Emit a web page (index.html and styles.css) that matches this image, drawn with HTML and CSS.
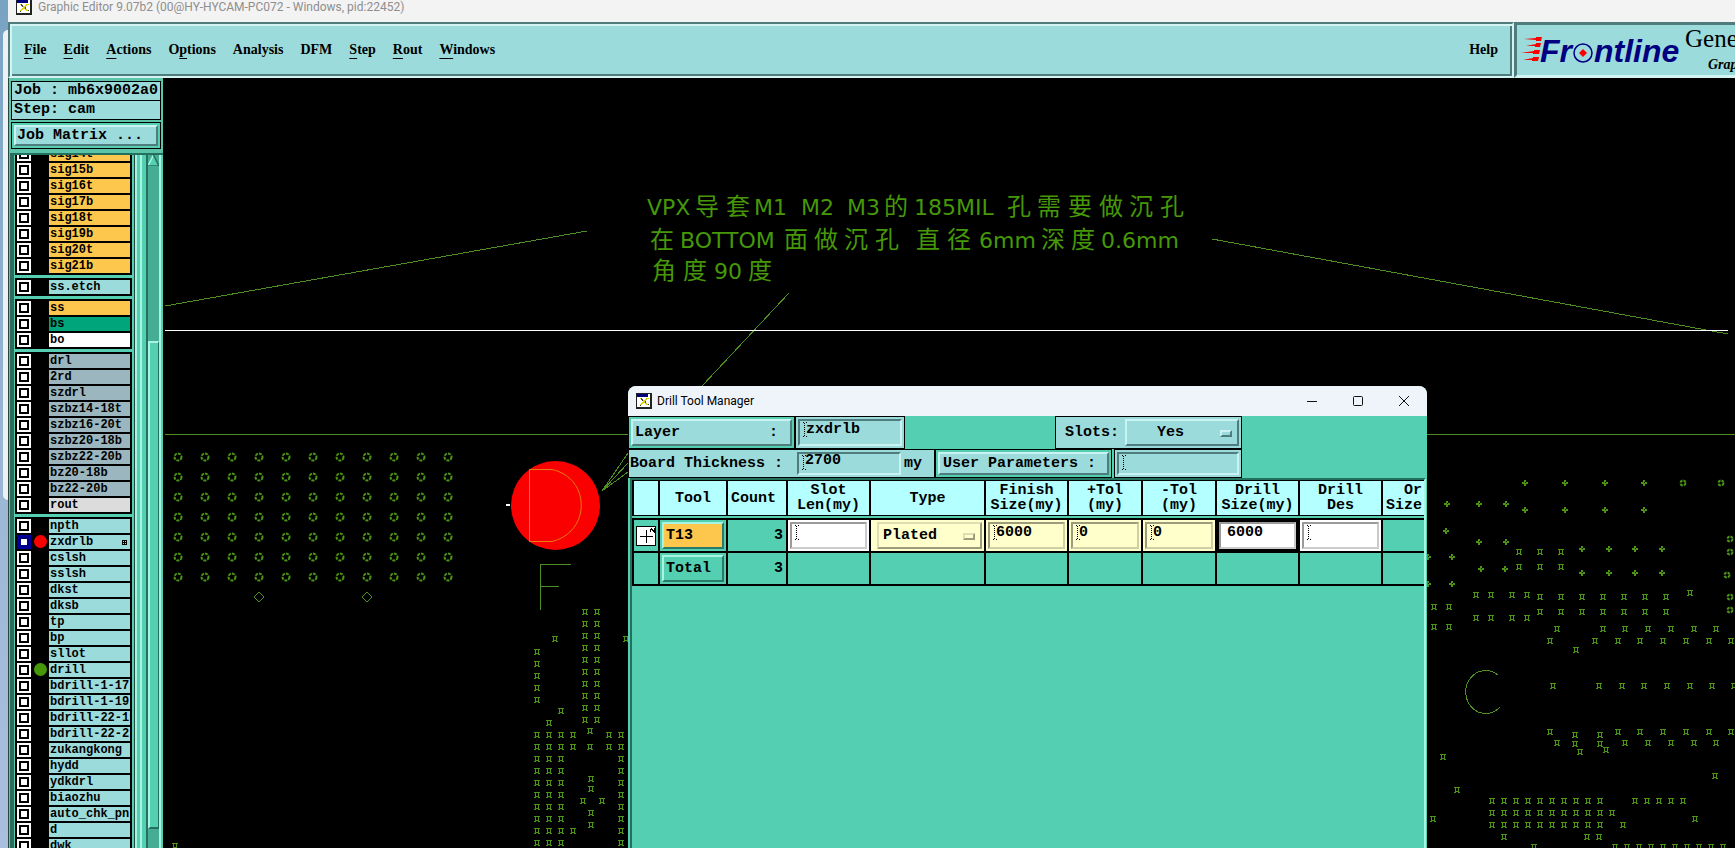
FILE: index.html
```html
<!DOCTYPE html>
<html lang="en">
<head>
    <meta charset="UTF-8">
    <meta name="viewport" content="width=device-width, initial-scale=1.0">
    <title>Graphic Editor</title>
    <link rel="stylesheet" href="styles.css">
</head>
<body>
    <div class="desktop">
        <div class="behind-window"></div>
    </div>

    <div class="app">
        <header class="titlebar">
            <svg class="x-icon" width="16" height="16" viewBox="0 0 16 16" shape-rendering="crispEdges">
                <rect width="16" height="16" fill="#222"/>
                <rect x="1" y="1" width="13" height="13" fill="#fff"/>
                <rect x="1" y="1" width="11" height="3" fill="#00007c"/>
                <path d="M4 5h2v1h1v1h2v-1h1v-1h3v1h-2v1h-1v1h-1v1h1v1h1v1h1v1h-2v-1h-1v-1h-2v1h-1v1h-2v-1h1v-1h1v-1h1v-1h-1v-1h-1v-1h-1z" fill="#e0d400"/>
                <path d="M5 5l2 3M10 8l-1 2M12 11l1 1M4 12h1" stroke="#444" fill="none"/>
            </svg>
            <span>Graphic Editor 9.07b2 (00@HY-HYCAM-PC072 - Windows, pid:22452)</span>
        </header>

        <div class="top">
            <nav class="menubar">
                <button><u>F</u>ile</button>
                <button><u>E</u>dit</button>
                <button><u>A</u>ctions</button>
                <button>O<u>p</u>tions</button>
                <button>Analysis</button>
                <button>DFM</button>
                <button><u>S</u>tep</button>
                <button><u>R</u>out</button>
                <button><u>W</u>indows</button>
                <button class="help">Help</button>
            </nav>
            <div class="brand">
                <svg class="logo" width="164" height="34" viewBox="0 0 164 34">
                    <g fill="#fb0000">
                        <path d="M3 4l12-1V2h6l-1 4h-5V5z"/>
                        <path d="M5 11l10-2V8h5l-1 4h-5v-1z"/>
                        <path d="M0 18l13-2v-1h6l-1 4h-6v-1z"/>
                        <path d="M2 25l10-2v-1h6l-1 4h-6v-1z"/>
                    </g>
                    <text x="19" y="27" class="logo-text">Fr</text>
                    <circle cx="62" cy="18" r="9" fill="none" stroke="#000080" stroke-width="1.5"/>
                    <path d="M62 14l4 4-4 4-4-4z" fill="#fb0000"/>
                    <text x="73" y="27" class="logo-text">ntline</text>
                </svg>
                <div class="brand-text">
                    <div class="brand-name">Genesis</div>
                    <div class="brand-sub">Graphic</div>
                </div>
            </div>
        </div>

        <div class="workspace">
            <aside class="sidebar">
                <div class="info">Job : mb6x9002a0</div>
                <div class="info">Step: cam</div>
                <div class="matrix"><button class="raised">Job Matrix ...</button></div>
                <div class="list-frame">
                    <div class="layers" id="layers"></div>
                    <div class="rails"></div>
                    <div class="scrollbar">
                        <svg width="11" height="11" viewBox="0 0 11 11">
                            <path d="M5.500 0L11 11H0z" fill="#55cfb1"/>
                            <path d="M5.500 0L0 11" stroke="#a6f5e2" stroke-width="1.500"/>
                            <path d="M5.500 0L11 11H0" stroke="#24705f" stroke-width="1.500" fill="none"/>
                        </svg>
                        <div class="trough-top"></div>
                        <div class="thumb"></div>
                        <div class="trough-bottom"></div>
                    </div>
                </div>
            </aside>

            <main class="canvas">
                <svg class="board" width="100%" height="100%">
                    <defs>
                        <path id="pad" d="M-3-3h6v1h-6zM-2-2h1v4h-1zM1-2h1v4h-1zM-2 1h4v1h-4zM-3 2h2v1h-2zM1 2h2v1h-2z"/>
                        <path id="cross" fill-rule="evenodd" d="M-1-3h2v2h2v2h-2v2h-2v-2h-2v-2h2zM0-1h1v1h-1z"/>
                        <circle id="via" r="2.500" class="ring"/>
                        <circle id="hole" r="3.500" class="ring"/>
                    </defs>
                    <g transform="translate(-163 -78)">
                        <g class="trace">
                            <path d="M165 306L587 231M1212 239L1728 334M789 293L702 386"/>
                            <path d="M165 434.500H1735"/>
                            <path d="M602 491L628 453M602 491L628 463M602 491L628 472"/>
                            <path d="M571 564.500H540.500V610M540 586.500H559"/>
                            <path d="M1498 675A20 21.500 0 1 0 1500 707"/>
                            <path d="M259 592l5 5-5 5-5-5zM367 592l5 5-5 5-5-5z"/>
                        </g>
                        <path d="M165 330.500H1728" stroke="#fff"/>
                        <circle cx="555.500" cy="505.500" r="44.500" fill="#fb0000"/>
                        <path d="M529.500 469.500H552C591 478 591 532 552 541.500H529.500z" fill="none" stroke="#e87a10"/>
                        <rect x="506" y="504" width="4" height="2" fill="#fff"/>
                        <g class="note">
                            <text y="215"><tspan x="647">VPX</tspan><tspan x="695" class="cjk">导</tspan><tspan x="726" class="cjk">套</tspan><tspan x="754">M1</tspan><tspan x="801">M2</tspan><tspan x="847">M3</tspan><tspan x="884" class="cjk">的</tspan><tspan x="914">185MIL</tspan><tspan x="1007" class="cjk">孔</tspan><tspan x="1037" class="cjk">需</tspan><tspan x="1068" class="cjk">要</tspan><tspan x="1099" class="cjk">做</tspan><tspan x="1129" class="cjk">沉</tspan><tspan x="1160" class="cjk">孔</tspan></text>
                            <text y="248"><tspan x="650" class="cjk">在</tspan><tspan x="680">BOTTOM</tspan><tspan x="784" class="cjk">面</tspan><tspan x="814" class="cjk">做</tspan><tspan x="844" class="cjk">沉</tspan><tspan x="875" class="cjk">孔</tspan><tspan x="916" class="cjk">直</tspan><tspan x="947" class="cjk">径</tspan><tspan x="979">6mm</tspan><tspan x="1041" class="cjk">深</tspan><tspan x="1071" class="cjk">度</tspan><tspan x="1101">0.6mm</tspan></text>
                            <text y="279"><tspan x="652" class="cjk">角</tspan><tspan x="683" class="cjk">度</tspan><tspan x="714">90</tspan><tspan x="748" class="cjk">度</tspan></text>
                        </g>
                        <g id="pads" class="pads"></g>
                    </g>
                </svg>

                <section class="dialog">
                    <header class="dialog-title">
                        <svg class="x-icon" width="16" height="16" viewBox="0 0 16 16" shape-rendering="crispEdges">
                            <rect width="16" height="16" fill="#222"/>
                            <rect x="1" y="1" width="13" height="13" fill="#fff"/>
                            <rect x="1" y="1" width="11" height="3" fill="#00007c"/>
                            <path d="M4 5h2v1h1v1h2v-1h1v-1h3v1h-2v1h-1v1h-1v1h1v1h1v1h1v1h-2v-1h-1v-1h-2v1h-1v1h-2v-1h1v-1h1v-1h1v-1h-1v-1h-1v-1h-1z" fill="#e0d400"/>
                            <path d="M5 5l2 3M10 8l-1 2M12 11l1 1M4 12h1" stroke="#444" fill="none"/>
                        </svg>
                        <span>Drill Tool Manager</span>
                        <div class="window-buttons">
                            <button aria-label="Minimize"><svg width="10" height="10"><path d="M0 5.500H10" stroke="#111"/></svg></button>
                            <button aria-label="Maximize"><svg width="10" height="10"><rect x=".5" y=".5" width="9" height="9" rx="1" fill="none" stroke="#111"/></svg></button>
                            <button aria-label="Close"><svg width="10" height="10"><path d="M0 0L10 10M10 0L0 10" stroke="#111"/></svg></button>
                        </div>
                    </header>

                    <div class="form-row first">
                        <div class="box green layer-box"><button class="raised"><span>Layer</span><span>:</span></button></div>
                        <div class="box name-box"><input class="field beam" aria-label="Layer" value="zxdrlb"></div>
                        <div class="box slots-box">
                            <label for="slots">Slots:</label>
                            <span class="option">
                                <select id="slots" class="raised"><option>Yes</option><option>No</option></select>
                            </span>
                        </div>
                    </div>
                    <div class="form-row">
                        <div class="box thickness-box">
                            <label for="thickness">Board Thickness :</label>
                            <input id="thickness" class="field beam" value="2700">
                            <span>my</span>
                        </div>
                        <div class="box green user-box"><button class="raised">User Parameters :</button></div>
                        <div class="box params-box"><input class="field beam" aria-label="User Parameters"></div>
                    </div>

                    <div class="tools">
                        <table>
                            <colgroup>
                                <col class="w-icon"><col class="w-tool"><col class="w-count"><col class="w-size"><col class="w-type"><col class="w-size"><col class="w-tol"><col class="w-tol"><col class="w-size"><col class="w-size"><col class="w-size">
                            </colgroup>
                            <thead>
                                <tr>
                                    <th></th>
                                    <th>Tool</th>
                                    <th class="left">Count</th>
                                    <th>Slot<br>Len(my)</th>
                                    <th>Type</th>
                                    <th>Finish<br>Size(my)</th>
                                    <th>+Tol<br>(my)</th>
                                    <th>-Tol<br>(my)</th>
                                    <th>Drill<br>Size(my)</th>
                                    <th>Drill<br>Des</th>
                                    <th class="left">&nbsp;&nbsp;Or<br>Size</th>
                                </tr>
                            </thead>
                            <tbody>
                                <tr>
                                    <td>
                                        <button class="expand" aria-label="Expand">
                                            <svg width="20" height="20" shape-rendering="crispEdges">
                                                <rect x=".5" y=".5" width="19" height="19" fill="#fff" stroke="#000"/>
                                                <path d="M4 10.500H17M10.500 4V17" stroke="#000"/>
                                                <path d="M14.500 6V2.500M15 2.500L18 5.500V2" stroke="#000" fill="none"/>
                                            </svg>
                                        </button>
                                    </td>
                                    <td><button class="tool orange">T13</button></td>
                                    <td class="count">3</td>
                                    <td class="white"><input class="field beam" aria-label="Slot Len"></td>
                                    <td class="cream">
                                        <span class="option">
                                            <select class="raised" aria-label="Type"><option>Plated</option><option>Non Plated</option></select>
                                        </span>
                                    </td>
                                    <td class="cream"><input class="field beam" aria-label="Finish Size" value="6000"></td>
                                    <td class="cream"><input class="field beam" aria-label="+Tol" value="0"></td>
                                    <td class="cream"><input class="field beam" aria-label="-Tol" value="0"></td>
                                    <td class="white focus"><input class="field" aria-label="Drill Size" value="6000"></td>
                                    <td class="white"><input class="field beam" aria-label="Drill Des"></td>
                                    <td></td>
                                </tr>
                                <tr>
                                    <td></td>
                                    <td><button class="tool">Total</button></td>
                                    <td class="count">3</td>
                                    <td></td><td></td><td></td><td></td><td></td><td></td><td></td><td></td>
                                </tr>
                            </tbody>
                        </table>
                    </div>
                </section>
            </main>
        </div>
    </div>

    <script>
        // layer list, grouped as in the job matrix
        const groups = [
            { type: 'signal', names: ['sig14t', 'sig15b', 'sig16t', 'sig17b', 'sig18t', 'sig19b', 'sig20t', 'sig21b'] },
            { type: 'misc', names: ['ss.etch'] },
            { type: 'signal', names: ['ss', 'bs', 'bo'] },
            { type: 'drill', names: ['drl', '2rd', 'szdrl', 'szbz14-18t', 'szbz16-20t', 'szbz20-18b', 'szbz22-20b', 'bz20-18b', 'bz22-20b', 'rout'] },
            { type: 'misc', names: ['npth', 'zxdrlb', 'cslsh', 'sslsh', 'dkst', 'dksb', 'tp', 'bp', 'sllot', 'drill', 'bdrill-1-17', 'bdrill-1-19', 'bdrill-22-19', 'bdrill-22-21', 'zukangkong', 'hydd', 'ydkdrl', 'biaozhu', 'auto_chk_pnl', 'd', 'dwk'] }
        ];
        const special = { bs: 'mask', bo: 'white', rout: 'rout' };
        const dots = { zxdrlb: 'red', drill: 'green' };

        document.getElementById('layers').innerHTML = groups.map(g => `<div class="group">${g.names.map(n => `
            <label class="layer">
                <input type="checkbox" ${n === 'zxdrlb' ? 'checked' : ''}>
                <span class="dot ${dots[n] || ''}"></span>
                <span class="layer-name ${special[n] || g.type}">${n}${n === 'zxdrlb' ? '<i class="mark"></i>' : ''}</span>
            </label>`).join('')}</div>`).join('');

        // features on the board: [y, x, x, ...]
        function step(start, gap, count) {
            return Array.from({ length: count }, (_, i) => start + gap * i);
        }

        const pads = [
            [639, 555, 626], [711, 561], [723, 549], [731, 590],
            [735, 537, 549, 561, 573, 609, 621], [747, 537, 549, 561, 573, 590, 609, 621],
            [779, 591], [789, 591], [801, 583, 602], [813, 591], [825, 591], [831, 573], [846, 175],
            [552, 1519, 1540, 1561], [567, 1519, 1540, 1561],
            [595, 1476, 1491, 1512, 1527], [618, 1476, 1491, 1512, 1527],
            [597, ...step(1540, 21, 7)], [612, ...step(1540, 21, 7)], [593, 1690],
            [607, 1434, 1449], [627, 1434, 1449],
            [629, 1557, 1603, 1625, 1648, 1671, 1694, 1716],
            [641, 1550, 1595, 1618, 1640, 1663, 1686, 1709, 1731], [650, 1576],
            [686, 1553, 1599, 1622, 1644, 1667, 1690, 1712, 1734],
            [732, 1550, 1618, 1640, 1663, 1686, 1709, 1731], [735, 1575, 1600],
            [743, 1557, 1625, 1648, 1671, 1694, 1716], [744, 1575, 1600],
            [752, 1580], [750, 1606], [757, 1443], [776, 1715], [790, 1457], [819, 1433, 1695],
            [801, ...step(1492, 12, 10), ...step(1635, 12, 5)],
            [813, ...step(1492, 12, 11)], [825, ...step(1492, 12, 10), 1623],
            [837, 1504, 1587, 1599], [847, 1534, ...step(1615, 12, 10)]
        ];
        step(612, 12, 10).forEach(y => pads.push([y, 585, 597]));
        step(652, 12, 5).forEach(y => pads.push([y, 537]));
        step(759, 12, 8).forEach(y => pads.push([y, 537, 549, 561, 621]));

        const crosses = [
            [483, 1525, 1565, 1605, 1644], [510, 1525, 1565, 1605, 1644],
            [504, 1447, 1479, 1506], [531, 1446], [542, 1479, 1506],
            [549, 1582, 1609, 1635, 1662], [573, 1582, 1609, 1635, 1662],
            [569, 1481, 1505], [557, 1428, 1452], [584, 1428, 1452]
        ];
        const vias = [[483, 1683, 1721], [539, 1730], [552, 1730], [575, 1727], [597, 1730], [610, 1730]];
        const holes = step(457, 20, 7).map(y => [y, ...step(178, 27, 11)]);

        function draw(id, rows) {
            return rows.map(([y, ...xs]) => xs.map(x => `<use href="#${id}" x="${x}" y="${y}"/>`).join('')).join('');
        }
        document.getElementById('pads').innerHTML =
            draw('pad', pads) + draw('cross', crosses) + draw('via', vias) + draw('hole', holes);
    </script>
</body>
</html>
```

FILE: styles.css
```css
*, *::before, *::after {
    box-sizing: border-box;
}
body {
    margin: 0;
    height: 100vh;
    display: flex;
    overflow: hidden;
    background-color: #000;
    color: #000;
    font: bold 15px/18px "Liberation Mono", "Courier New", monospace;
}
button, input, select {
    font: inherit;
    color: inherit;
    margin: 0;
    padding: 0;
    border: none;
    border-radius: 0;
    background: none;
    appearance: none;
    outline: none;
}

/* desktop strip left of the window */
.desktop {
    flex: 0 0 8px;
    padding: 30px 0 0 3px;
    background: linear-gradient(#79a3c3, #9db8d6 60%, #aabfdd);
}
.behind-window {
    height: 470px;
    background-color: #eef1f3;
    border-radius: 5px 0 0 5px;
}

.app {
    flex: 1;
    min-width: 0;
    display: flex;
    flex-direction: column;
}
.titlebar {
    height: 22px;
    padding: 0 0 8px 8px;
    display: flex;
    align-items: center;
    gap: 6px;
    background-color: #f3f3f3;
    color: #8e8e8e;
    font: 12px/14px Roboto, sans-serif;
}
.titlebar .x-icon {
    flex: none;
}

/* menu bar */
.top {
    height: 56px;
    display: flex;
    background-color: #9cdbdb;
}
.menubar {
    flex: 1;
    display: flex;
    align-items: center;
    gap: 17px;
    padding: 0 14px 0 14px;
    border: 2px solid;
    border-color: #4f7d7d #d4f4f4 #d4f4f4 #4f7d7d;
    box-shadow: inset 2px 2px #d4f4f4, inset -2px -2px #4f7d7d;
    font: bold 14px/20px "Liberation Serif", "Times New Roman", serif;
}
.menubar u {
    text-underline-offset: 4px;
    text-decoration-thickness: 1px;
}
.menubar .help {
    margin-left: auto;
}
.brand {
    flex: 0 0 221px;
    display: flex;
    overflow: hidden;
    padding: 10px 0 0 4px;
    border-style: solid;
    border-width: 3px 0 3px 3px;
    border-color: #4f7d7d #d4f4f4 #d4f4f4 #4f7d7d;
    font-family: "Liberation Serif", "Times New Roman", serif;
}
.logo {
    flex: none;
}
.logo-text {
    font: italic bold 32px "Liberation Sans", Arial, sans-serif;
    fill: #000080;
}
.brand-text {
    margin-top: -10px;
    white-space: nowrap;
}
.brand-name {
    font-size: 25px;
    font-weight: normal;
    line-height: 28px;
}
.brand-sub {
    padding-left: 23px;
    font-size: 14px;
    font-style: italic;
    line-height: 24px;
}

/* layer panel */
.workspace {
    flex: 1;
    min-height: 0;
    display: flex;
}
.sidebar {
    flex: 0 0 155px;
    display: flex;
    flex-direction: column;
    padding: 3px 0 0 1px;
    border-left: 1px solid #24483f;
    background-color: #5cc4a8;
}
.info {
    margin: 0 2px 0 1px;
    padding: 0 2px;
    height: 20px;
    border: 1px solid #000;
    background-color: #9cdbdb;
    white-space: nowrap;
}
.info + .info {
    margin-top: -1px;
}
.matrix {
    margin: 2px 2px 4px 1px;
    height: 27px;
    padding: 2px;
    border: 1px solid #000;
    background-color: #55cfb1;
}
.raised {
    border: 2px solid;
    border-color: #c9f2f2 #4f7d7d #4f7d7d #c9f2f2;
    background-color: #9cdbdb;
}
.matrix .raised {
    width: 100%;
    height: 100%;
    padding-left: 1px;
    line-height: 16px;
    text-align: left;
}
.list-frame {
    flex: 1;
    min-height: 0;
    display: flex;
    overflow: hidden;
    border-top: 2px solid #24705f;
    border-left: 4px solid #2f6b5c;
    background-color: #55cfb1;
}
.layers {
    flex: 0 0 121px;
    margin: -10px 0 0;
    padding-left: 1px;
    border-right: 1px solid #24483f;
}
.group {
    width: 117px;
    margin-bottom: 3px;
    padding: 2px 2px 0;
    background-color: #000;
}
.layer {
    display: grid;
    grid-template-columns: 14px 18px 81px;
    padding-bottom: 2px;
}
.layer input {
    width: 14px;
    height: 14px;
    background-color: #fff;
    box-shadow: inset 0 0 0 2px #fff, inset 0 0 0 4px #000;
}
.layer input:checked {
    box-shadow: inset 0 0 0 2px #0000a0, inset 0 0 0 4px #00007c;
}
.dot {
    width: 13px;
    height: 13px;
    margin-left: 3px;
    border-radius: 50%;
}
.dot.red {
    background-color: #fb0000;
}
.dot.green {
    background-color: #469808;
}
.layer-name {
    height: 14px;
    padding: 0 3px 0 1px;
    display: flex;
    align-items: center;
    justify-content: space-between;
    overflow: hidden;
    font-size: 12px;
    line-height: 14px;
    white-space: nowrap;
}
.signal {
    background-color: #fdc74d;
}
.misc {
    background-color: #9cdbdb;
}
.drill {
    background-color: #9bb6bf;
}
.mask {
    background-color: #00a57c;
}
.white {
    background-color: #fff;
}
.rout {
    background-color: #dcdcdc;
}
.mark {
    width: 5px;
    height: 5px;
    border: 1px solid #000;
    background: linear-gradient(#000, #000) center / 1px 100% no-repeat, linear-gradient(#000, #000) center / 100% 1px no-repeat;
}
.rails {
    flex: 0 0 11px;
    background: linear-gradient(90deg, #a6f5e2 2px, #55cfb1 2px 5px, #a6f5e2 5px 7px, #55cfb1 7px);
}
.scrollbar {
    flex: 0 0 15px;
    display: flex;
    flex-direction: column;
    border-left: 2px solid #24705f;
    border-right: 2px solid #a6f5e2;
    background-color: #46ad94;
}
.scrollbar svg {
    flex: none;
}
.trough-top {
    flex: 0 0 175px;
}
.trough-bottom {
    flex: 0 0 19px;
}
.thumb {
    flex: 1;
    border: 2px solid;
    border-width: 2px 1px 2px 2px;
    border-color: #a6f5e2 #24705f #24705f #a6f5e2;
    background-color: #55cfb1;
}

/* board view */
.canvas {
    position: relative;
    flex: 1;
    min-width: 0;
    overflow: hidden;
    background-color: #000;
}
.board {
    display: block;
}
.trace {
    fill: none;
    stroke: #4f8f1f;
    stroke-width: 1;
    shape-rendering: crispEdges;
}
.pads {
    fill: #4c9414;
}
.ring {
    fill: none;
    stroke: #4c9414;
    stroke-width: 2;
    stroke-dasharray: 3 1;
}
.note {
    fill: #469808;
    font: 22px "DejaVu Sans", sans-serif;
}
.note .cjk {
    font: 24px "Noto Sans CJK SC", sans-serif;
}

/* drill tool manager floats over the board */
.dialog {
    position: absolute;
    left: 465px;
    top: 308px;
    bottom: 0;
    width: 799px;
    display: flex;
    flex-direction: column;
    overflow: hidden;
    border-radius: 8px 8px 0 0;
    background-color: #55cfb1;
}
.dialog-title {
    flex: 0 0 30px;
    display: flex;
    align-items: center;
    gap: 5px;
    padding: 0 18px 0 8px;
    background-color: #eff3fa;
    font: 12px/16px Roboto, sans-serif;
}
.window-buttons {
    margin-left: auto;
    display: flex;
    gap: 36px;
}
.window-buttons button, .window-buttons svg {
    display: block;
}
.form-row {
    display: flex;
    height: 29px;
}
.form-row.first {
    height: 33px;
}
.box {
    display: flex;
    align-items: center;
    padding: 2px;
    border: 1px solid #000;
    background-color: #9cdbdb;
}
.box.green {
    background-color: #55cfb1;
}
.box .raised, .box .option {
    flex: 1;
    height: 100%;
}
.layer-box {
    width: 167px;
}
.layer-box .raised {
    display: flex;
    align-items: center;
    justify-content: space-between;
    padding: 0 12px 0 2px;
}
.name-box {
    width: 110px;
}
.slots-box {
    width: 187px;
    margin-left: 150px;
}
.slots-box label {
    width: 67px;
    padding-left: 7px;
}
.thickness-box {
    width: 307px;
    padding-left: 1px;
}
.thickness-box label {
    width: 167px;
}
.thickness-box .field {
    flex: 0 0 104px;
    margin-right: 3px;
}
.user-box {
    width: 177px;
}
.user-box .raised {
    padding-left: 3px;
    text-align: left;
}
.params-box {
    width: 128px;
    margin-left: 2px;
}
.field {
    width: 100%;
    height: 100%;
    min-width: 0;
    padding: 0 2px 6px 6px;
    border: 2px solid;
    border-color: #4f7d7d #c9f2f2 #c9f2f2 #4f7d7d;
}
/* dotted text cursor at the start of a field */
.beam {
    background-image:
        repeating-linear-gradient(#000 0 1px, transparent 1px 2px),
        linear-gradient(90deg, #000 1px, transparent 1px 3px, #000 3px),
        linear-gradient(90deg, #000 1px, transparent 1px 3px, #000 3px);
    background-repeat: no-repeat;
    background-size: 1px 13px, 4px 1px, 4px 1px;
    background-position: 4px 2px, 3px 1px, 3px 15px;
}
.option {
    position: relative;
    display: flex;
}
.option::after {
    content: "";
    position: absolute;
    right: 7px;
    top: 50%;
    width: 12px;
    height: 7px;
    margin-top: -3px;
    border: 2px solid;
    border-color: #c9f2f2 #4f7d7d #4f7d7d #c9f2f2;
}
.option select {
    padding-left: 30px;
}

/* tool table */
.tools {
    flex: 1;
    margin: 0 1px 0 2px;
    overflow: hidden;
    border: 2px solid;
    border-color: #24705f #a6f5e2 #55cfb1 #24705f;
    border-bottom: none;
}
table {
    width: 834px;
    table-layout: fixed;
    border-collapse: separate;
    border-spacing: 0;
}
.w-icon { width: 28px; }
.w-tool { width: 68px; }
.w-count { width: 60px; }
.w-size { width: 83px; }
.w-type { width: 115px; }
.w-tol { width: 74px; }
th {
    height: 36px;
    padding: 0;
    border: solid #000;
    border-width: 1px 2px 1px 0;
    background-color: #b4ffff;
    line-height: 15px;
}
th:first-child, td:first-child {
    border-left: 2px solid #000;
}
th.left {
    padding-left: 3px;
    text-align: left;
}
tbody::before {
    content: "";
    display: block;
    height: 2px;
}
td {
    height: 33px;
    padding: 2px;
    border: solid #000;
    border-width: 0 2px 2px 0;
}
tbody tr:first-child td {
    height: 35px;
    border-top-width: 2px;
}
td .field, td .raised, td .tool {
    display: block;
    width: 100%;
    height: 27px;
}
td .field {
    border-color: #9a9a9a #cbcbcb #cbcbcb #9a9a9a;
}
.cream {
    background-color: #ffffcc;
}
.cream .raised {
    background-color: #ffffcc;
}
.cream .field {
    border-color: #9c9c7c #cfcfa6 #cfcfa6 #9c9c7c;
}
.cream .raised, .cream .option::after {
    border-color: #dedeb2 #9c9c7c #9c9c7c #dedeb2;
}
.cream .option {
    padding-left: 4px;
}
.cream .option select {
    padding-left: 4px;
}
.count {
    padding-right: 3px;
    text-align: right;
}
.focus {
    box-shadow: inset 0 0 0 2px #000;
}
.focus .field {
    padding-left: 6px;
}
.tool {
    padding-left: 2px;
    border: 2px solid;
    border-color: #a6f5e2 #2a7a68 #2a7a68 #a6f5e2;
    text-align: left;
}
.tool.orange {
    background-color: #fdc74d;
}
.expand {
    display: block;
}
.expand svg {
    display: block;
}
```
